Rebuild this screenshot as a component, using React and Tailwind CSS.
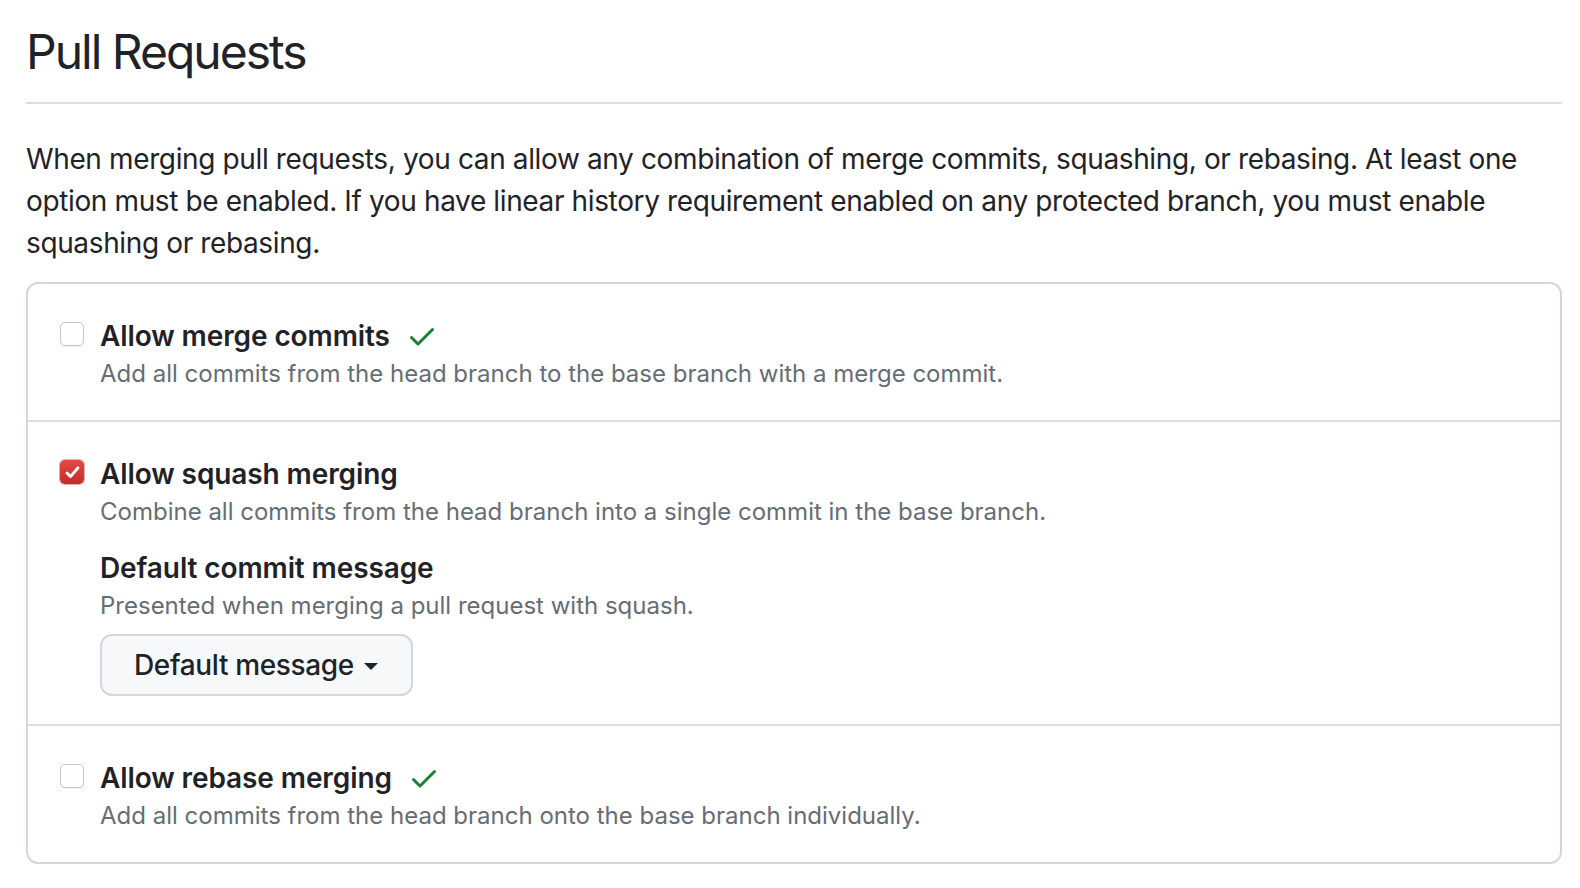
import React from "react";

function GreenCheck() {
  return (
    <svg
      viewBox="0 0 16 16"
      width="32"
      height="32"
      className="ml-[16px] shrink-0 fill-[#1a7f37]"
    >
      <path d="M13.78 4.22a.75.75 0 0 1 0 1.06l-7.25 7.25a.75.75 0 0 1-1.06 0L2.22 9.28a.751.751 0 0 1 .018-1.042.751.751 0 0 1 1.042-.018L6 10.94l6.72-6.72a.75.75 0 0 1 1.06 0Z" />
    </svg>
  );
}

function Checkbox({ checked }) {
  if (checked) {
    return (
      <span className="flex h-[24px] w-[24px] items-center justify-center rounded-[5px] bg-gradient-to-b from-[#df4a45] to-[#c9282a] shadow-[0_0_0_1px_rgba(170,30,30,0.35)]">
        <svg viewBox="0 0 24 24" width="19" height="19">
          <path
            d="M5 12.5l4.5 4.5L19 6"
            fill="none"
            stroke="white"
            strokeWidth="3.6"
            strokeLinecap="round"
            strokeLinejoin="round"
          />
        </svg>
      </span>
    );
  }
  return (
    <span className="block h-[24px] w-[24px] rounded-[5px] border border-[#c6c6c6] bg-white shadow-[0_1px_1px_rgba(0,0,0,0.06)]" />
  );
}

function Option({ checked, title, note, badge, children }) {
  return (
    <div className="flex">
      <div className="w-[40px] shrink-0 pt-[6px]">
        <Checkbox checked={checked} />
      </div>
      <div>
        <div className="flex h-[40px] items-center text-[28px] font-semibold tracking-[-0.1px] text-[#1f2328]">
          {title}
          {badge && <GreenCheck />}
        </div>
        <p className="text-[24px] leading-[36px] text-[#656d76]">{note}</p>
        {children}
      </div>
    </div>
  );
}

export default function App() {
  return (
    <div className="min-h-screen bg-white pl-[26px] pr-[18px] font-['Inter','Liberation_Sans',sans-serif]">
      <div className="border-b-2 border-[#d8dee4] pt-[16px] pb-[14px]">
        <h2 className="text-[48px] font-normal leading-[72px] tracking-[-2px] text-[#1f2328]">
          Pull Requests
        </h2>
      </div>

      <p className="mt-[34px] mb-[18px] text-[28px] leading-[42px] tracking-[-0.37px] text-[#1f2328]">
        When merging pull requests, you can allow any combination of merge
        commits, squashing, or rebasing. At least one option must be enabled.
        If you have linear history requirement enabled on any protected
        branch, you must enable squashing or rebasing.
      </p>

      <div className="rounded-[12px] border-2 border-[#d0d7de]">
        <div className="px-[32px] pt-[32px] pb-[28px]">
          <Option
            title="Allow merge commits"
            note="Add all commits from the head branch to the base branch with a merge commit."
            badge
          />
        </div>

        <div className="border-t-2 border-[#d8dee4] px-[32px] pt-[32px] pb-[28px]">
          <Option
            checked
            title="Allow squash merging"
            note="Combine all commits from the head branch into a single commit in the base branch."
          >
            <div className="mt-[18px] flex h-[40px] items-center text-[28px] font-semibold tracking-[-0.1px] text-[#1f2328]">
              Default commit message
            </div>
            <p className="text-[24px] leading-[36px] text-[#656d76]">
              Presented when merging a pull request with squash.
            </p>
            <button
              type="button"
              className="mt-[10px] flex h-[62px] items-center rounded-[12px] border-2 border-[#d0d7de] bg-[#f6f8fa] pl-[32px] pr-[33px] text-[28px] font-medium tracking-[-0.35px] text-[#1f2328]"
            >
              Default message
              <span className="ml-[10px] mt-[2px] inline-block h-0 w-0 border-x-[7px] border-t-[7px] border-x-transparent border-t-[#1f2328]" />
            </button>
          </Option>
        </div>

        <div className="border-t-2 border-[#d8dee4] px-[32px] pt-[32px] pb-[28px]">
          <Option
            title="Allow rebase merging"
            note="Add all commits from the head branch onto the base branch individually."
            badge
          />
        </div>
      </div>
    </div>
  );
}
